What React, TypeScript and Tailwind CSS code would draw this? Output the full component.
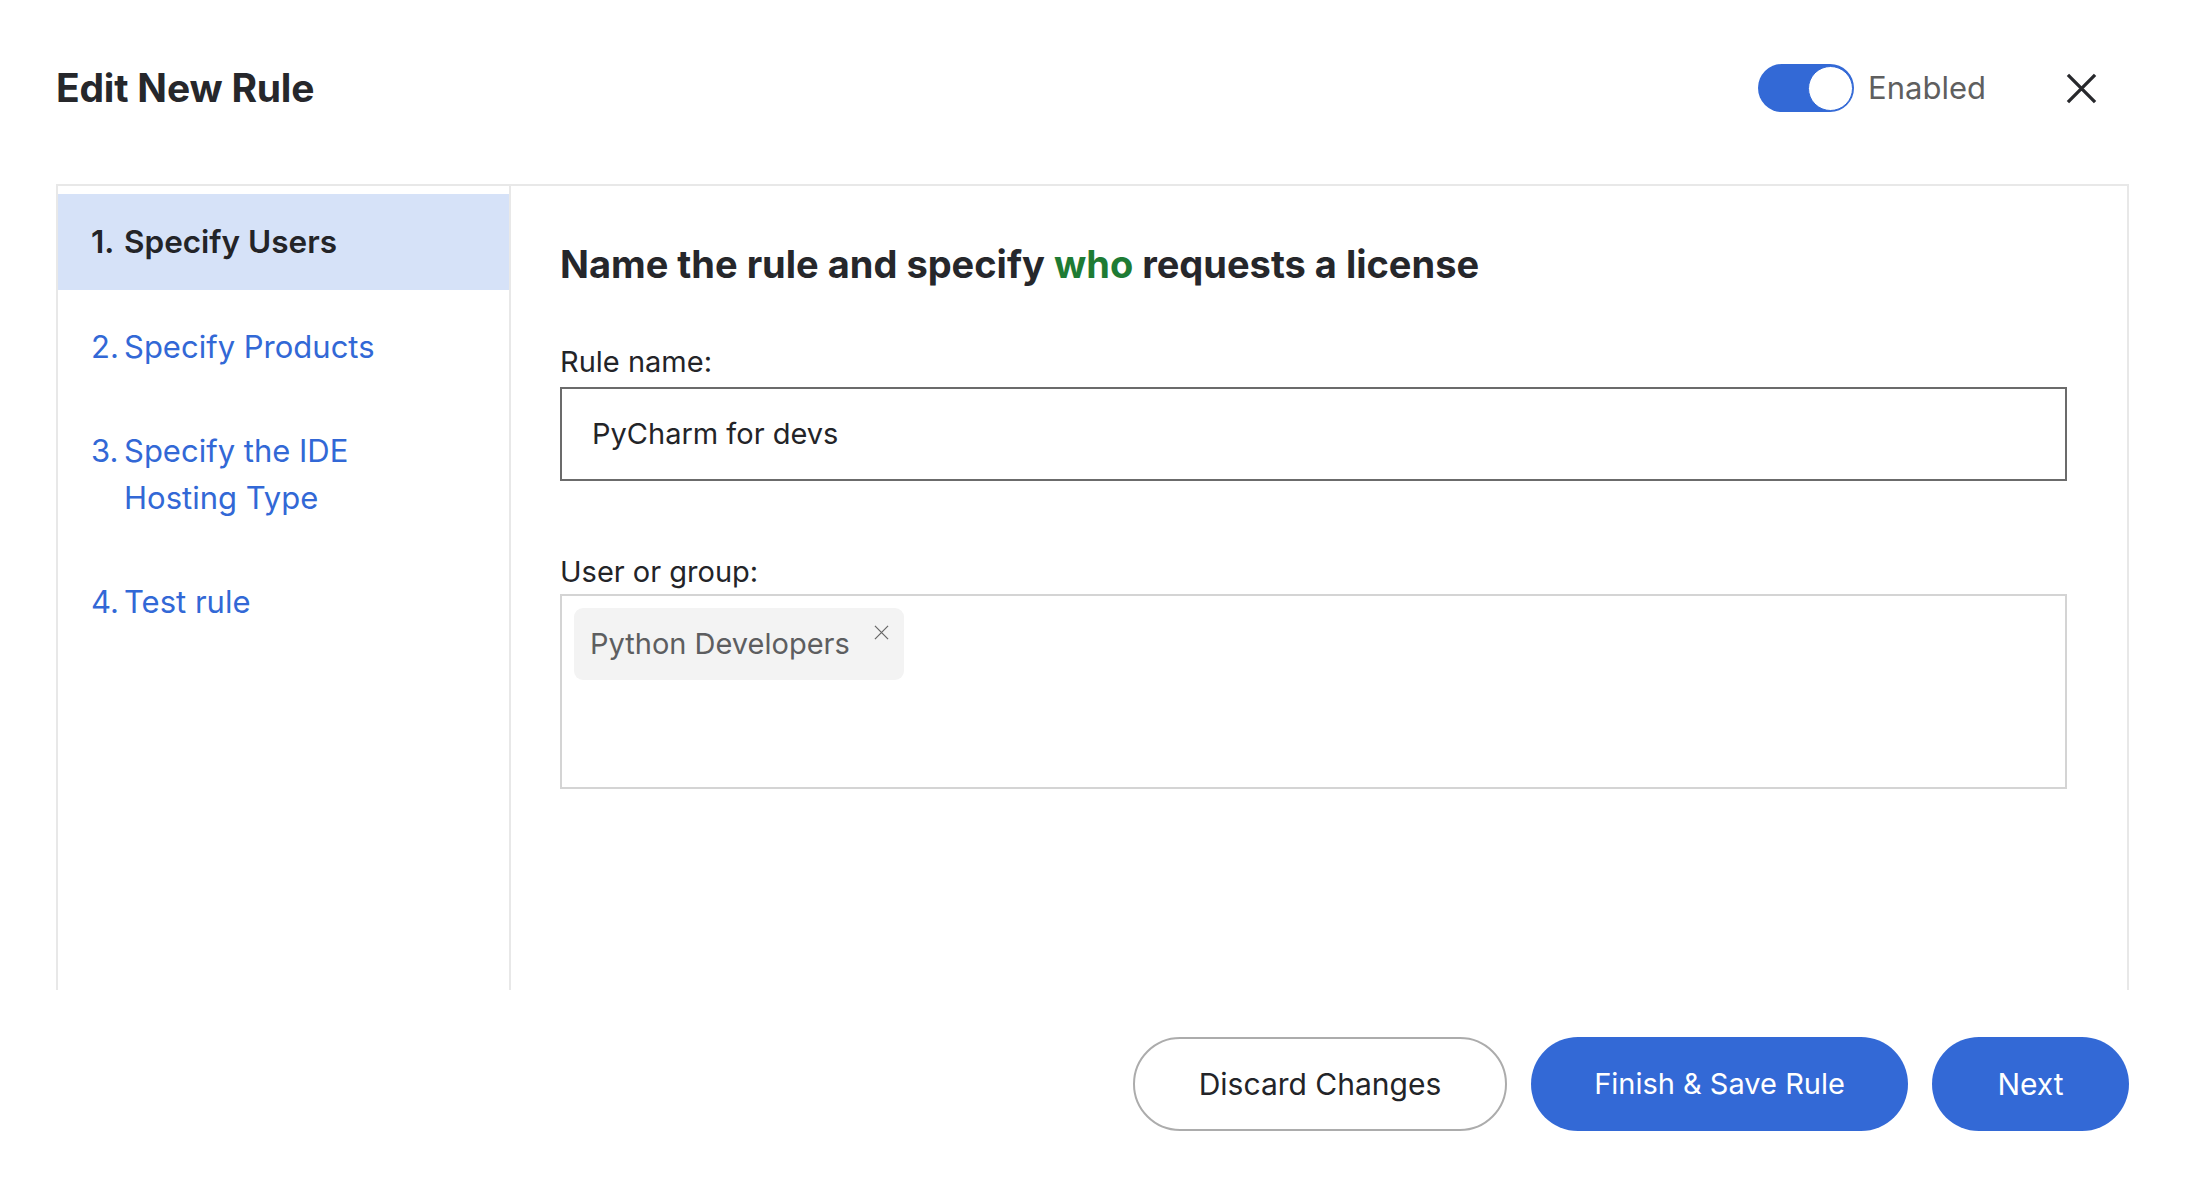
const steps = [
  { num: '1.', label: ['Specify Users'], active: true },
  { num: '2.', label: ['Specify Products'], active: false },
  { num: '3.', label: ['Specify the IDE', 'Hosting Type'], active: false },
  { num: '4.', label: ['Test rule'], active: false },
]

function Toggle() {
  return (
    <div className="flex h-[48px] w-[96px] items-center justify-end rounded-full bg-[#3369d6] pr-[1px]">
      <div className="h-[45px] w-[45px] rounded-full border border-[#3369d6] bg-white" />
    </div>
  )
}

function Cross({ size, stroke, className }: { size: number; stroke: number; className?: string }) {
  return (
    <svg width={size} height={size} viewBox="0 0 32 32" className={className}>
      <path d="M2 2L30 30M30 2L2 30" stroke="currentColor" strokeWidth={stroke} fill="none" />
    </svg>
  )
}

export default function App() {
  return (
    <div
      className="min-h-[1178px] w-full bg-white pl-[56px] pr-[59px] text-[#232428]"
      style={{ fontFamily: 'Inter, "Noto Sans", sans-serif' }}
    >
      {/* header */}
      <div className="flex h-[184px] items-center pb-[8px]">
        <h1 className="text-[39px] font-bold leading-[48px] tracking-[-0.2px] text-[#26272b]">
          Edit New Rule
        </h1>
        <div className="ml-auto flex items-center">
          <Toggle />
          <span className="ml-[14px] text-[31px] leading-[40px] text-[#5f5f5f]">Enabled</span>
          <button className="ml-[79px] mr-[32px] flex h-[32px] w-[32px] items-center justify-center text-[#27282c]">
            <Cross size={31} stroke={3.4} />
          </button>
        </div>
      </div>

      {/* panel */}
      <div className="flex h-[806px] border-x-2 border-t-2 border-[#e8e8e8]">
        <nav className="flex w-[453px] shrink-0 flex-col gap-[9px] border-r-2 border-[#e8e8e8] pt-[8px]">
          {steps.map((s) => (
            <div
              key={s.num}
              className={
                s.active
                  ? 'flex bg-[#d6e2f8] py-[24px] pl-[33px] text-[31.5px] font-semibold leading-[48px] text-[#232428]'
                  : 'flex py-[24px] pl-[33px] text-[31px] leading-[47px] text-[#3268d6]'
              }
            >
              <span className="w-[33px] shrink-0">{s.num}</span>
              <span>
                {s.label.map((l, i) => (
                  <span key={i} className="block">
                    {l}
                  </span>
                ))}
              </span>
            </div>
          ))}
        </nav>

        <main className="flex-1 pl-[49px] pr-[60px] pt-[54px]">
          <h2 className="text-[38px] font-bold leading-[48px] text-[#26272b]">
            Name the rule and specify <span className="text-[#1e7b34]">who</span> requests a license
          </h2>

          <label className="mt-[56px] block text-[29px] leading-[36px] text-[#232428]">Rule name:</label>
          <div className="mt-[7px] flex h-[94px] items-center border-2 border-[#6b6b6b] px-[30px] text-[29px] text-[#232428]">
            PyCharm for devs
          </div>

          <label className="mt-[73px] block text-[29px] leading-[36px] text-[#232428]">User or group:</label>
          <div className="mt-[4px] h-[195px] border-2 border-[#d4d4d4] px-[12px] pt-[12px]">
            <div className="inline-flex h-[72px] items-start rounded-[9px] bg-[#f3f3f3] pl-[16px] pr-[15px]">
              <span className="mt-[16px] text-[29px] leading-[40px] text-[#5d5e60]">Python Developers</span>
              <Cross size={15} stroke={2.6} className="ml-[24px] mt-[17px] text-[#666]" />
            </div>
          </div>
        </main>
      </div>

      {/* footer */}
      <div className="flex justify-end gap-[24px] pt-[47px]">
        <button className="flex h-[94px] w-[374px] items-center justify-center rounded-full border-2 border-[#acacac] bg-white text-[30px] text-[#232428]">
          Discard Changes
        </button>
        <button className="flex h-[94px] w-[377px] items-center justify-center rounded-full bg-[#3369d6] text-[29px] text-white">
          Finish &amp; Save Rule
        </button>
        <button className="flex h-[94px] w-[197px] items-center justify-center rounded-full bg-[#3369d6] text-[30px] text-white">
          Next
        </button>
      </div>
    </div>
  )
}
